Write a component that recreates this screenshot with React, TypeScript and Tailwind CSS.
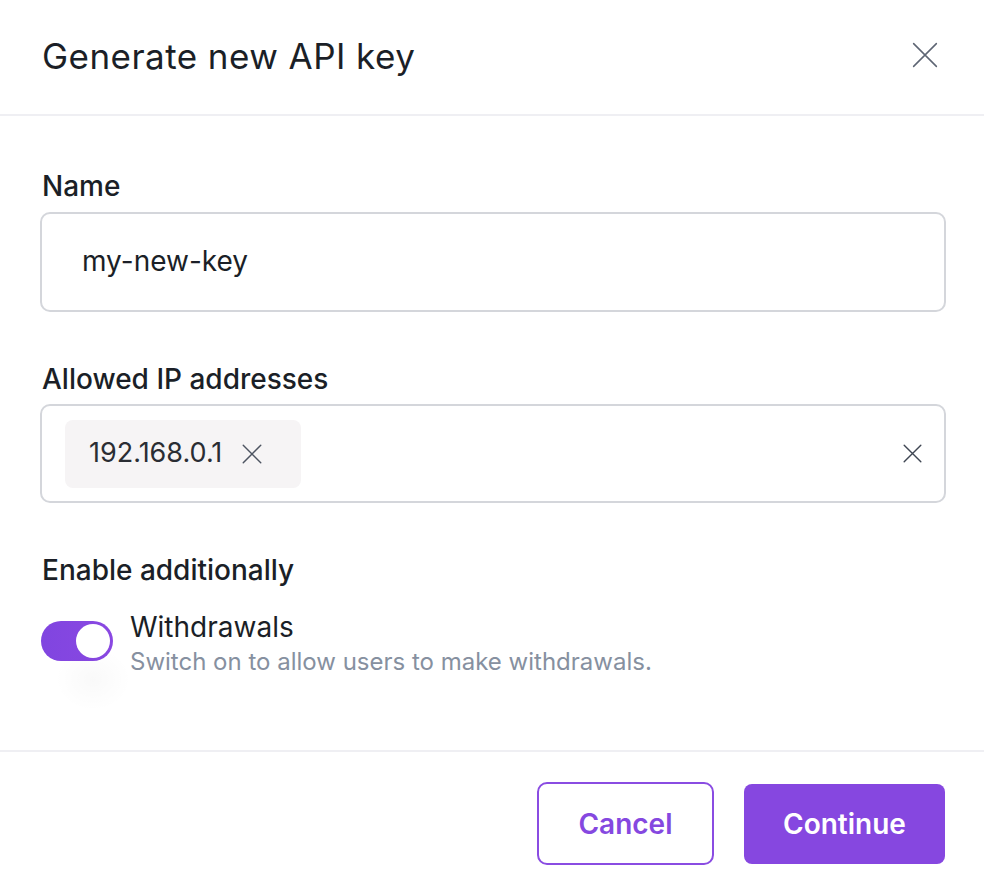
import React from 'react';

const XIcon: React.FC<{ className?: string; strokeWidth?: number }> = ({ className, strokeWidth = 2 }) => (
  <svg viewBox="0 0 24 24" fill="none" stroke="currentColor" strokeWidth={strokeWidth} strokeLinecap="round" className={className}>
    <path d="M1.5 1.5l21 21M22.5 1.5l-21 21" />
  </svg>
);

const App: React.FC = () => {
  return (
    <div className="w-[984px] h-[890px] bg-white text-[#1b1f27] overflow-hidden" style={{ fontFamily: 'Inter, "Noto Sans", sans-serif' }}>
      <div className="flex items-center justify-between h-[116px] pl-[42px] pr-[46px] border-b-2 border-[#efeff3]">
        <h2 className="text-[35px] font-normal tracking-[0.45px] pb-[2px]">Generate new API key</h2>
        <button aria-label="Close" className="text-[#5d6573] -mt-[4px]">
          <XIcon className="w-[26px] h-[26px]" strokeWidth={1.4} />
        </button>
      </div>

      <div className="flex flex-col pl-[40px] pr-[38px] pt-[53px] h-[634px]">
        <label className="text-[28px] font-medium leading-[34px] pl-[2px]">Name</label>
        <div className="mt-[9px] h-[100px] rounded-[10px] border-2 border-[#d4d6db] flex items-center pl-[40px] pb-[2px]">
          <span className="text-[28px]">my-new-key</span>
        </div>

        <label className="mt-[50px] text-[28px] font-medium leading-[34px] pl-[2px]">Allowed IP addresses</label>
        <div className="mt-[8px] h-[99px] rounded-[10px] border-2 border-[#d4d6db] flex items-center justify-between pl-[23px] pr-[22px]">
          <div className="h-[68px] w-[236px] rounded-[8px] bg-[#f6f4f5] flex items-center pl-[24px] gap-[20px]">
            <span className="text-[27px] text-[#2a2d33]">192.168.0.1</span>
            <XIcon className="w-[20px] h-[20px] text-[#4d5461]" strokeWidth={1.7} />
          </div>
          <XIcon className="w-[19px] h-[19px] text-[#3f4653]" strokeWidth={1.8} />
        </div>

        <label className="mt-[50px] text-[28px] font-medium leading-[34px] pl-[2px]">Enable additionally</label>
        <div className="mt-[23px] flex items-start gap-[17px] pl-[1px]">
          <div className="relative mt-[11px] w-[72px] h-[40px] rounded-full bg-gradient-to-r from-[#8045e0] to-[#8a48e2] shrink-0">
            <div className="absolute top-[26px] left-[14px] w-[76px] h-[64px] rounded-full bg-[radial-gradient(closest-side,rgba(0,0,0,0.025),rgba(0,0,0,0))]" />
            <div className="absolute right-[3px] top-[3px] w-[34px] h-[34px] rounded-full bg-white" />
          </div>
          <div className="flex flex-col">
            <span className="text-[28px] leading-[34px]">Withdrawals</span>
            <span className="mt-[3px] text-[24px] leading-[30px] text-[#8690a0]">Switch on to allow users to make withdrawals.</span>
          </div>
        </div>
      </div>

      <div className="border-t-2 border-[#efeff3] flex justify-end items-start gap-[30px] pr-[39px] pt-[30px] h-[140px]">
        <button className="w-[177px] h-[83px] rounded-[10px] border-2 border-[#8a4ce2] text-[#8548e0] text-[28px] font-semibold">Cancel</button>
        <button className="mt-[2px] w-[201px] h-[80px] rounded-[8px] bg-[#8647e0] text-white text-[28px] font-semibold">Continue</button>
      </div>
    </div>
  );
};

export default App;
